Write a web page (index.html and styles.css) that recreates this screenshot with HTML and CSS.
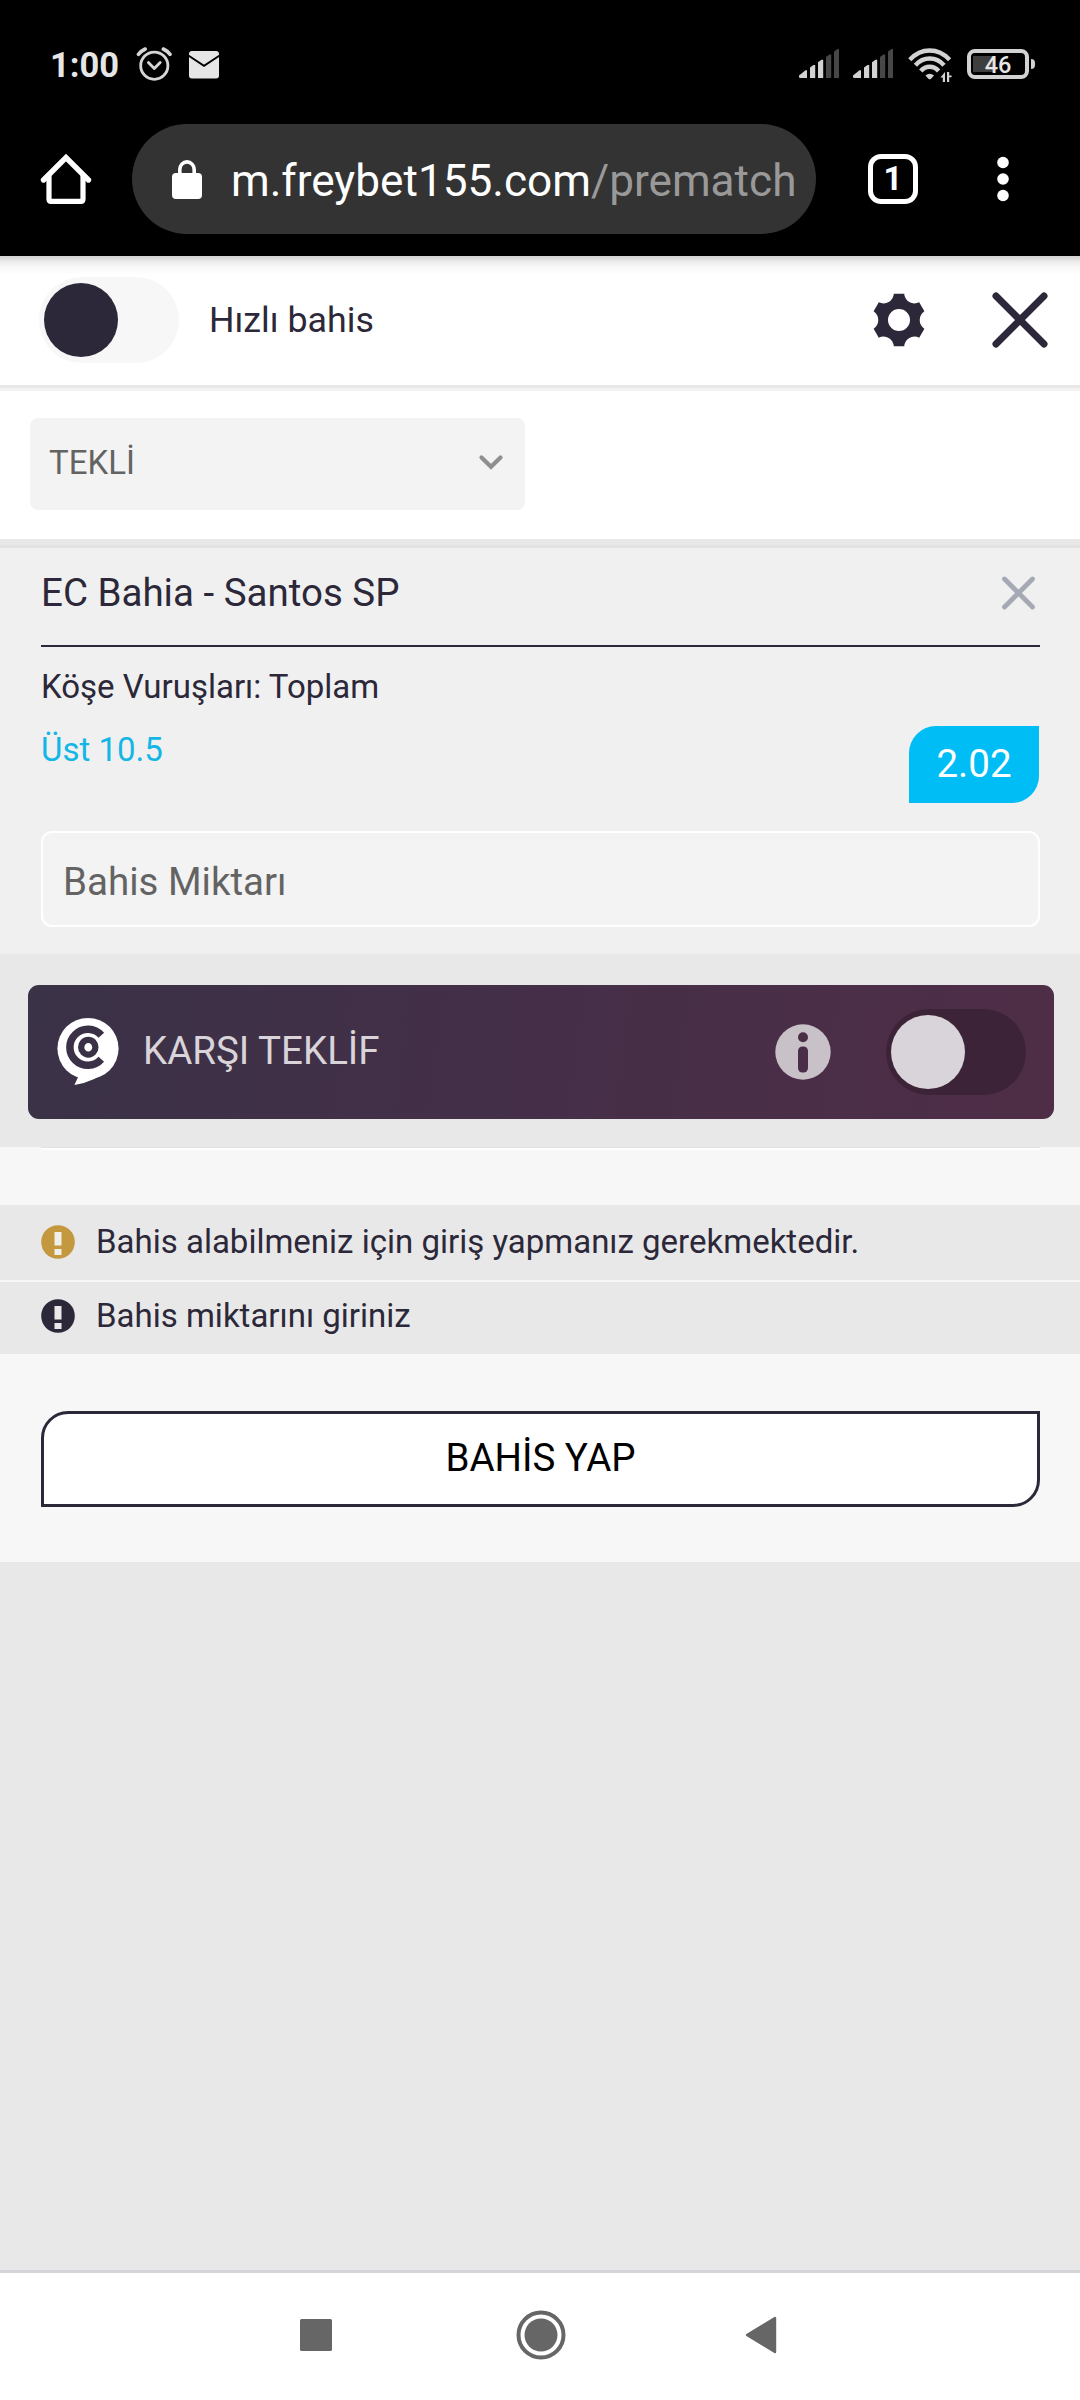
FILE: index.html
```html
<!DOCTYPE html>
<html lang="tr">
<head>
<meta charset="utf-8">
<title>Kupon</title>
<link rel="stylesheet" href="styles.css">
</head>
<body>
<div class="phone">
  <div class="status">
    <span class="clock">1:00</span>
    <svg class="alarm" width="36" height="35" viewBox="0 0 36 35" fill="none" stroke="#d6d6d6" stroke-linecap="round" stroke-linejoin="round">
      <circle cx="18.3" cy="18.7" r="13.6" stroke-width="2.8"/>
      <path d="M12.4 15.4l5.9 6 5.9-6" stroke-width="2.8"/>
      <path d="M2.4 7.4Q5 4 9.2 2M34.1 7.4Q31.500 4 27.300 2" stroke-width="3.6"/>
    </svg>
    <svg class="mail" width="30" height="28" viewBox="0 0 30 28">
      <rect width="30" height="27.500" rx="3" fill="#e6e6e6"/>
      <path d="M-1 4.300L15 14.800 31 4.300" fill="none" stroke="#000" stroke-width="1.900"/>
    </svg>
    <span class="grow"></span>
    <svg class="signal" width="40" height="29" viewBox="0 0 40 29">
      <path d="M0 26.500L6.500 21.300 8 21.300V29H1.200Q0 29 0 28zM11 18.500L14.500 16H16.200V29H11zM19 13.200L22.500 10.800H24.200V29H19z" fill="#d2d2d2"/>
      <path d="M27 8L30.500 5.500H32.200V29H27zM35 2.500L38.500 0H40V29H35z" fill="#474747"/>
    </svg>
    <svg class="signal" width="40" height="29" viewBox="0 0 40 29">
      <path d="M0 26.500L6.500 21.300 8 21.300V29H1.200Q0 29 0 28zM11 18.500L14.500 16H16.200V29H11zM19 13.200L22.500 10.800H24.200V29H19z" fill="#d2d2d2"/>
      <path d="M27 8L30.500 5.500H32.200V29H27zM35 2.500L38.500 0H40V29H35z" fill="#474747"/>
    </svg>
    <svg class="wifi" width="44" height="35" viewBox="0 0 44 35">
      <g fill="none" stroke="#d2d2d2" stroke-width="4.500">
        <path d="M1.800 11.800Q10.500 2.600 21.700 2.600T41.600 11.800"/>
        <path d="M7.400 17.200Q13.500 10.600 21.700 10.600T36 17.200"/>
        <path d="M12.800 23Q16.500 18.800 21.700 18.800T30.600 23"/>
      </g>
      <path d="M17.400 27.600Q21.700 23.800 26 27.600L23 30.800Q21.700 31.800 20.400 30.800z" fill="#d2d2d2"/>
      <path d="M37 24v10h-2.200v-4.500h-2.400zM39 34V24h2.200v3.500h2.400v1.800h-2.400V34z" fill="#d2d2d2"/>
    </svg>
    <span class="battery"><span class="battery-text">46</span></span><span class="battery-tip"></span>
  </div>

  <div class="toolbar">
    <svg class="home" width="50" height="50" viewBox="0 0 50 50" fill="none" stroke="#fff">
      <path d="M2.500 26L25 3.600 47.500 26" stroke-width="5.400" stroke-linecap="round"/>
      <path d="M8 21V45.300Q8 47.400 10 47.400H40Q42 47.400 42 45.300V21" stroke-width="5.200"/>
    </svg>
    <div class="omnibox">
      <svg class="lock" width="30" height="39" viewBox="0 0 30 39">
        <rect y="13" width="30" height="26" rx="4" fill="#fff"/>
        <path d="M7.800 14V9.500a7.200 7.600 0 0 1 14.400 0V14" fill="none" stroke="#fff" stroke-width="3.600"/>
      </svg>
      <span class="url">m.freybet155.com<span class="url-path">/prematch</span></span>
    </div>
    <span class="tabs">1</span>
    <svg class="dots" width="12" height="46" viewBox="0 0 12 46" fill="#fff"><circle cx="6" cy="6.500" r="5.800"/><circle cx="6" cy="23" r="5.800"/><circle cx="6" cy="39.500" r="5.800"/></svg>
  </div>

  <div class="slip-head">
    <span class="switch"></span>
    <span class="quick">Hızlı bahis</span>
    <span class="grow"></span>
    <svg class="gear" width="54" height="54" viewBox="-27 -27 54 54">
      <path fill="#2c2839" fill-rule="evenodd" d="M-5.200-26.300H5.200A10.300 10.300 0 0 0 20.200-17.650L25.400-8.650A10.300 10.300 0 0 0 25.400 8.650L20.200 17.650A10.300 10.300 0 0 0 5.200 26.300H-5.200A10.300 10.300 0 0 0-20.200 17.650L-25.400 8.650A10.300 10.300 0 0 0-25.400-8.650L-20.200-17.650A10.300 10.300 0 0 0-5.200-26.300zM0-11A11 11 0 0 0 0 11A11 11 0 0 0 0-11z"/>
    </svg>
    <svg class="close" width="56" height="56" viewBox="0 0 56 56"><path d="M4 4L52 52M52 4L4 52" stroke="#2c2839" stroke-width="7" stroke-linecap="round"/></svg>
  </div>

  <div class="mode">
    <div class="select">
      <span class="select-text">TEKLİ</span>
      <svg width="24" height="15" viewBox="0 0 24 15"><path d="M2.500 2.500L12 11.800 21.500 2.500" fill="none" stroke="#8f8f8f" stroke-width="4.200" stroke-linecap="round"/></svg>
    </div>
  </div>

  <div class="bet">
    <div class="bet-title">
      <span class="match">EC Bahia - Santos SP</span>
      <svg width="33" height="34" viewBox="0 0 33 34"><path d="M2.500 3L30.500 31M30.500 3L2.500 31" stroke="#a5a9b3" stroke-width="4.800" stroke-linecap="round"/></svg>
    </div>
    <div class="bet-body">
      <div class="bet-info">
        <div class="market">Köşe Vuruşları: Toplam</div>
        <div class="pick">Üst 10.5</div>
      </div>
      <div class="odds"><span>2.02</span></div>
    </div>
    <div class="stake"><span class="stake-text">Bahis Miktarı</span></div>
  </div>

  <div class="counter-wrap">
    <div class="counter">
      <svg class="logo" width="63" height="68" viewBox="0 0 63 68">
        <circle cx="31" cy="30.500" r="30.600" fill="#fff"/>
        <path d="M52 51Q38 64 17.400 66.900L21.800 57.600L26 48z" fill="#fff"/>
        <path d="M44.300 17.300A18 18 0 1 0 44.300 41.300" fill="none" stroke="#3b3147" stroke-width="7.500"/>
        <ellipse cx="31.300" cy="29.200" rx="7.100" ry="7.400" fill="none" stroke="#3b3147" stroke-width="6.300"/>
      </svg>
      <span class="counter-text">KARŞI TEKLİF</span>
      <span class="grow"></span>
      <svg class="info" width="56" height="56" viewBox="0 0 56 56"><circle cx="28" cy="28" r="27.700" fill="#c8c1c8"/><circle cx="28" cy="13.300" r="5" fill="#4a2e47"/><rect x="23" y="22.500" width="10" height="26" rx="4.500" fill="#4a2e47"/></svg>
      <span class="switch switch-dark"></span>
    </div>
  </div>

  <div class="divider"><div class="divider-line"></div></div>

  <div class="note">
    <svg width="34" height="34" viewBox="0 0 34 34"><circle cx="17" cy="17" r="16.800" fill="#c3983f"/><path d="M13.500 7h7v13.500h-7zM13.500 24h7v6h-7z" fill="#f0efea"/></svg>
    <span class="note-text">Bahis alabilmeniz için giriş yapmanız gerekmektedir.</span>
  </div>
  <div class="note note-last">
    <svg width="34" height="34" viewBox="0 0 34 34"><circle cx="17" cy="17" r="16.800" fill="#2c2839"/><path d="M13.500 7h7v13.500h-7zM13.500 24h7v6h-7z" fill="#eaeaea"/></svg>
    <span class="note-text">Bahis miktarını giriniz</span>
  </div>

  <div class="action"><div class="place"><span class="place-text">BAHİS YAP</span></div></div>

  <div class="rest"></div>

  <div class="nav">
    <svg width="32" height="32" viewBox="0 0 32 32"><rect width="32" height="32" rx="1.500" fill="#666"/></svg>
    <svg width="50" height="50" viewBox="0 0 50 50"><circle cx="25" cy="25" r="22.500" fill="none" stroke="#666" stroke-width="4"/><circle cx="25" cy="25" r="16.500" fill="#666"/></svg>
    <svg width="32" height="38" viewBox="0 0 32 38"><path d="M2 19L30 2V36z" fill="#666" stroke="#666" stroke-width="2.400" stroke-linejoin="round"/></svg>
  </div>
</div>
</body>
</html>
```
FILE: styles.css
```css
* { box-sizing: border-box; }
body { margin: 0; background: #e8e8e8; font-family: Roboto, "Liberation Sans", sans-serif; color: #2c2839; }
svg { display: block; flex: none; overflow: visible; }
.phone { width: 1080px; height: 2400px; display: flex; flex-direction: column; overflow: hidden; }
.phone > * { flex: none; }
.grow { flex: 1; }

.status { height: 102px; padding: 28px 45px 0 50px; background: #000; display: flex; align-items: center; white-space: nowrap; }
.clock { font-size: 34.500px; font-weight: 700; color: #e6e6e6; width: 86px; }
.alarm { margin-right: 17px; margin-top: -2px; }
.signal { margin-right: 14px; margin-top: -3px; }
.signal + .wifi { margin-left: 1px; margin-right: 15px; margin-top: 1px; }
.battery { width: 62px; height: 30px; margin-top: -2px; border: 4px solid #d2d2d2; border-radius: 8px; display: flex; align-items: center; justify-content: center; background: linear-gradient(#3e3e3e, #3e3e3e) 2px 3px / 21px 16px no-repeat; }
.battery-text { font-size: 23.500px; font-weight: 500; color: #e6e6e6; line-height: 22px; padding-top: 2px; }
.battery-tip { width: 4px; height: 10px; margin-left: 2px; margin-top: -2px; border-radius: 0 4px 4px 0; background: #d2d2d2; }

.toolbar { height: 154px; padding: 0 71px 0 41px; background: #000; display: flex; align-items: center; }
.omnibox { margin-left: 41px; width: 684px; height: 110px; border-radius: 55px; background: #333; display: flex; align-items: center; padding-left: 40px; white-space: nowrap; }
.url { margin-left: 29px; font-size: 44.150px; color: #fff; padding-top: 3px; }
.url-path { color: #999; }
.tabs { margin-left: 52px; margin-right: 79px; width: 50px; height: 50px; border: 5.500px solid #fff; border-radius: 13px; color: #fff; font-size: 33px; font-weight: 700; line-height: 40px; text-align: center; }

.slip-head { height: 135px; padding: 0 32px 7px 39px; display: flex; align-items: center; background: linear-gradient(#d2d2d2 0, #dedede 3px, #ededed 6px, #f8f8f8 11px, #fff 19px, #fff 129px, #e8e8e8 129px, #e8e8e8 132px, #f2f2f2 132px); }
.switch { width: 140px; height: 86px; border-radius: 43px; background: #f7f7f7; padding: 6px 5px; flex: none; }
.switch::before { content: ""; display: block; width: 74px; height: 74px; border-radius: 50%; background: #2c2839; }
.quick { margin-left: 30px; font-size: 35.750px; }
.gear { margin-right: 66px; }

.mode { height: 157px; padding: 27px 30px 0; background: linear-gradient(#fff 148px, #e8e8e8 148px, #e8e8e8 154px, #e3e3e3 154px); }
.select { width: 495px; height: 92px; border-radius: 8px; background: #f3f3f3; display: flex; align-items: center; justify-content: space-between; padding: 0 22px 3px 19px; color: #636363; font-size: 33px; }

.bet { height: 406px; background: #f0f0f0; padding: 0 40px 0 41px; }
.bet-title { height: 99px; border-bottom: 2px solid #2c2839; padding: 0 5px 8px 0; display: flex; align-items: center; justify-content: space-between; font-size: 38.500px; }
.bet-body { height: 184px; display: flex; justify-content: space-between; }
.bet-info { padding-top: 20px; font-size: 33px; line-height: 40px; }
.pick { margin-top: 23px; color: #14b6e6; }
.odds { width: 130px; height: 77px; margin: 79px 1px 0 0; background: #00bdf5; border-radius: 27px 0; color: #fff; font-size: 38.500px; line-height: 76px; text-align: center; }
.stake { height: 96px; border: 2px solid #fff; border-radius: 11px; background: #f3f3f3; color: #636363; font-size: 38.500px; line-height: 98px; padding-left: 20px; }

.counter-wrap { height: 193px; padding: 31px 26px 0 28px; }
.counter { height: 134px; border-radius: 11px; padding: 0 28px 0 29px; display: flex; align-items: center; background: linear-gradient(98deg, #3a3247, #452f48 50%, #4f2d47); }
.counter-text { margin-left: 23px; font-size: 38.500px; color: #d9d4d9; padding-bottom: 3px; }
.info { margin-right: 55px; margin-top: -1px; }
.switch-dark { background: #3c2337; }
.switch-dark::before { background: #d9d4d9; }

.divider { height: 58px; background: #f7f7f7; padding: 0 40px 0 41px; }
.divider-line { height: 3px; border-top: 1px solid #e2e2e2; background: #fff; }

.note { height: 77px; padding: 0 41px 2px; display: flex; align-items: center; background: #e8e8e8; border-bottom: 2px solid #f7f7f7; font-size: 33px; }
.note-text { margin-left: 21px; padding-bottom: 1px; }
.note-last { height: 72px; border: 0; padding-bottom: 4px; }

.action { height: 208px; background: #f7f7f7; padding: 57px 40px 0 41px; }
.place { height: 96px; border: 3px solid #2c2839; border-radius: 27px 0; background: #fff; color: #000; font-size: 38.500px; line-height: 88px; text-align: center; }

.rest { height: 708px; }
.nav { height: 130px; background: #fff; border-top: 3px solid #d4d5d8; display: grid; grid-template-columns: 216px 229px 32px; align-items: center; padding: 0 0 3px 300px; }
```
